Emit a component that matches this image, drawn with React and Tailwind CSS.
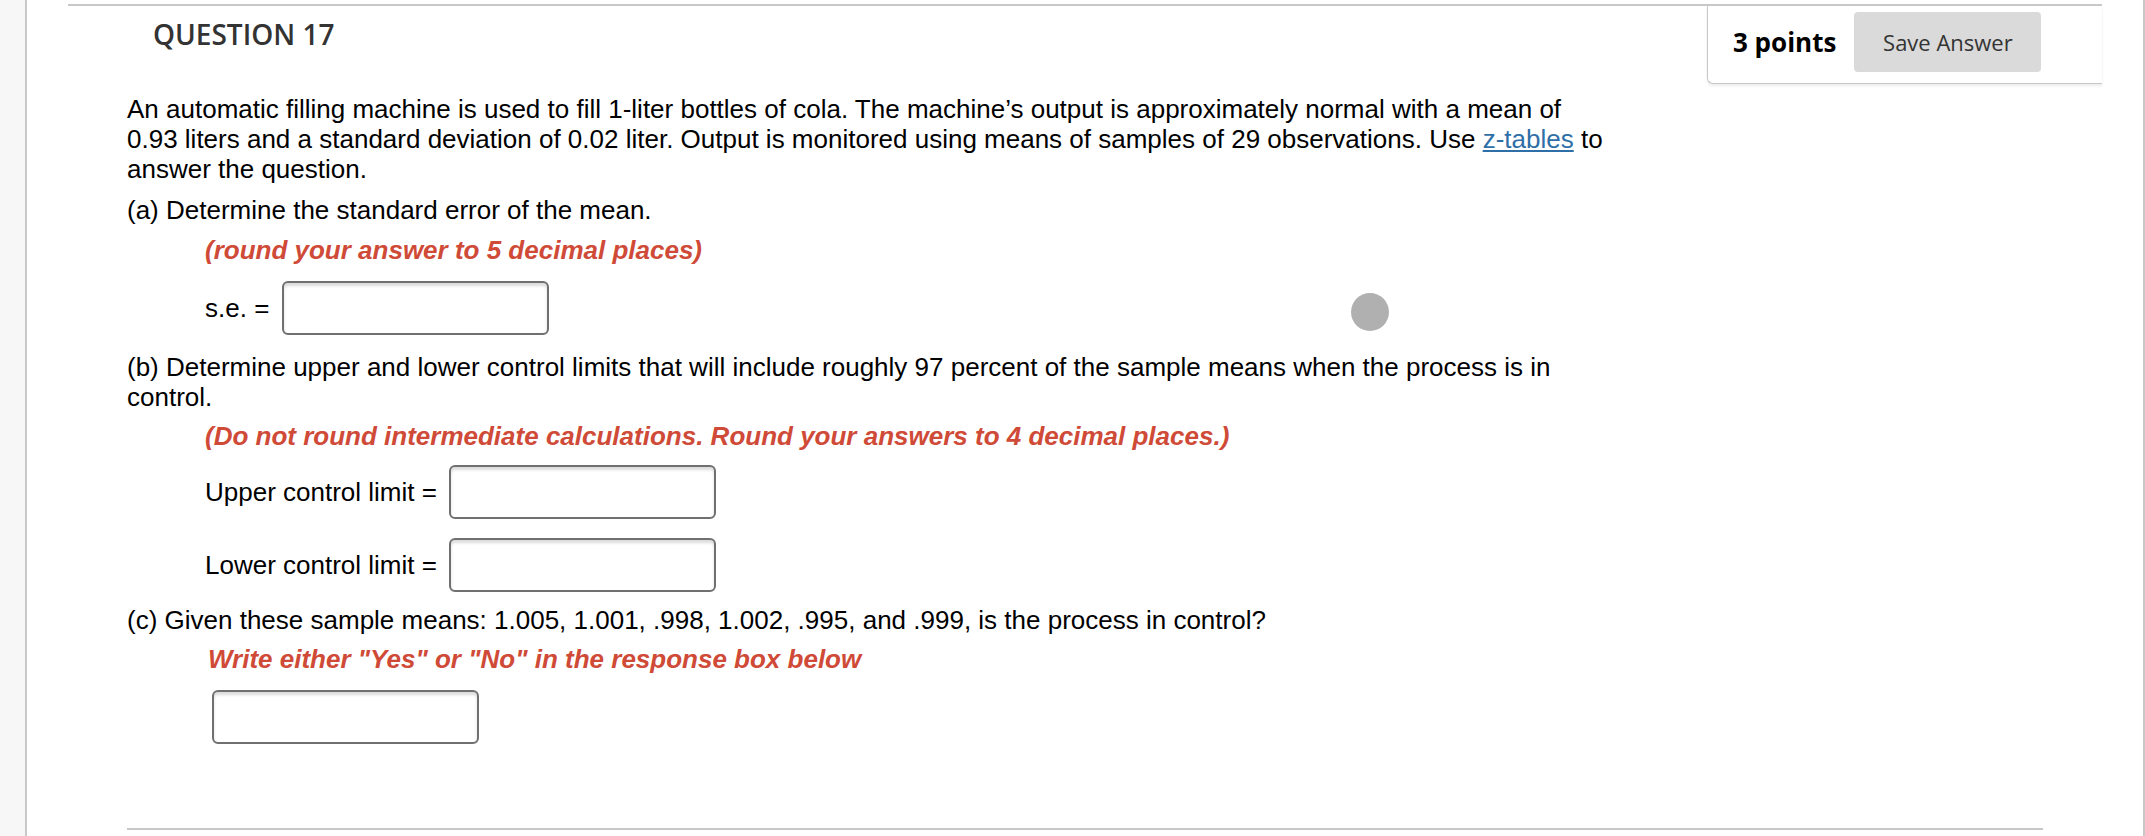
import React from 'react';

function AnswerBox() {
  return (
    <div className="h-[54px] w-[267px] rounded-[6px] border-2 border-[#707070] bg-white shadow-[inset_0_3px_3px_rgba(0,0,0,0.14)]" />
  );
}

export default function App() {
  const body = { fontFamily: '"Liberation Sans", Arial, sans-serif' };
  const open = { fontFamily: '"Open Sans", "Liberation Sans", sans-serif' };

  return (
    <div className="flex h-[836px] w-full overflow-hidden bg-white">
      {/* left rail */}
      <div className="w-[27px] shrink-0 border-r-2 border-[#c8c8c8] bg-[#f7f7f7]" />

      <div className="flex-1 pl-[41px] pr-[41px] pt-[4px]">
        {/* Header */}
        <div className="flex justify-between border-t-2 border-[#c8c8c8]">
          <h2
            className="pl-[85px] pt-[11px] text-[28px] font-semibold leading-[34px] text-[#333]"
            style={open}
          >
            QUESTION 17
          </h2>
          <div className="flex h-[78px] w-[395px] items-start gap-[18px] rounded-bl-[6px] border-b border-l border-[#c8c8c8] pl-[25px] pt-[6px] shadow-[0_2px_3px_rgba(0,0,0,0.08)]">
            <span className="flex h-[60px] items-center text-[26px] font-bold text-black" style={open}>
              3 points
            </span>
            <button
              className="h-[60px] w-[187px] rounded-[4px] bg-[#dadada] text-[22px] text-[#333]"
              style={open}
            >
              Save Answer
            </button>
          </div>
        </div>

        {/* Question body */}
        <div className="ml-[59px] mt-[10px] text-[26px] leading-[30px] text-black" style={body}>
          <p className="max-w-[1485px]">
            An automatic filling machine is used to fill 1-liter bottles of cola. The machine’s output is
            approximately normal with a mean of 0.93 liters and a standard deviation of 0.02 liter. Output is
            monitored using means of samples of 29 observations. Use{' '}
            <a href="#" className="text-[#2f6fa7] underline">
              z-tables
            </a>{' '}
            to answer the question.
          </p>

          <p className="mt-[11px]">(a) Determine the standard error of the mean.</p>
          <div className="ml-[78px]">
            <p className="mt-[10px] font-bold italic text-[#cf4a37]">(round your answer to 5 decimal places)</p>
            <div className="mt-[16px] flex items-center gap-[13px]">
              <span>s.e. =</span>
              <AnswerBox />
              <span className="ml-[789px] mt-2 h-[38px] w-[38px] rounded-full bg-[#b0b0b0]" />
            </div>
          </div>

          <p className="mt-[17px] max-w-[1485px]">
            (b) Determine upper and lower control limits that will include roughly 97 percent of the sample means
            when the process is in control.
          </p>
          <div className="ml-[78px]">
            <p className="mt-[9px] font-bold italic text-[#cf4a37]">
              (Do not round intermediate calculations. Round your answers to 4 decimal places.)
            </p>
            <div className="mt-[14px] flex items-center gap-[12px]">
              <span>Upper control limit =</span>
              <AnswerBox />
            </div>
            <div className="mt-[19px] flex items-center gap-[12px]">
              <span>Lower control limit =</span>
              <AnswerBox />
            </div>
          </div>

          <p className="mt-[13px]">
            (c) Given these sample means: 1.005, 1.001, .998, 1.002, .995, and .999, is the process in control?
          </p>
          <div className="ml-[81px]">
            <p className="mt-[9px] font-bold italic text-[#cf4a37]">Write either "Yes" or "No" in the response box below</p>
            <div className="ml-[4px] mt-[16px]">
              <AnswerBox />
            </div>
          </div>

          <div className="mr-[59px] mt-[84px] border-t-2 border-[#c8c8c8]" />
        </div>
      </div>

      {/* right rail */}
      <div className="w-[2px] shrink-0 bg-[#c8c8c8]" />
    </div>
  );
}
